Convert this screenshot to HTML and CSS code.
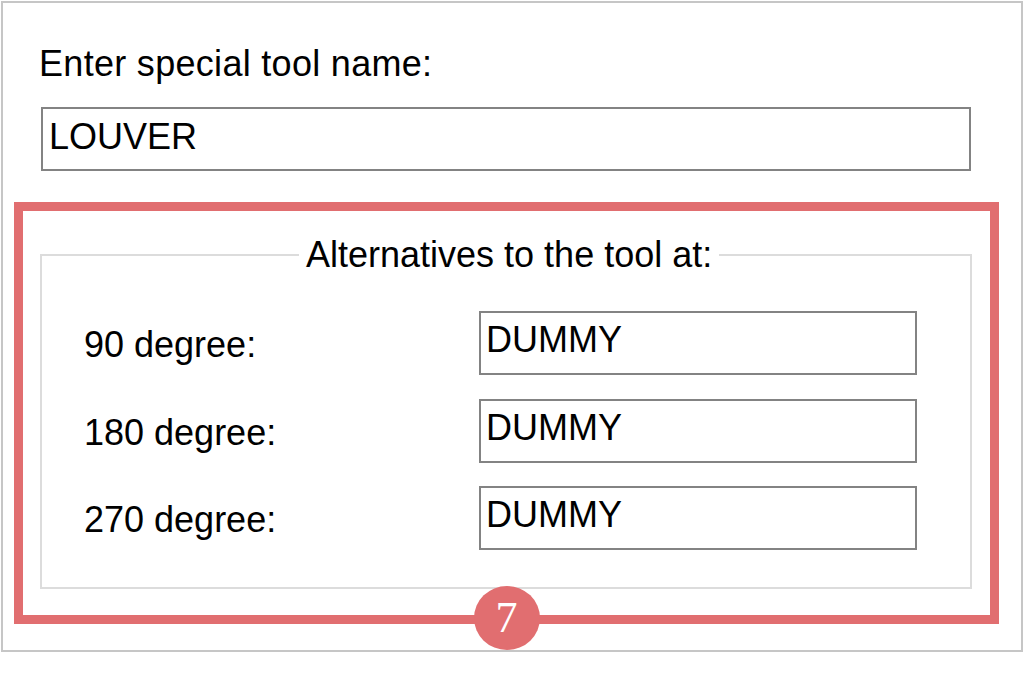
FILE: index.html
```html
<!DOCTYPE html>
<html lang="en">
<head>
<meta charset="utf-8">
<title>Special tool</title>
<link rel="stylesheet" href="styles.css">
</head>
<body>
<div class="frame">
  <div class="top">
    <div class="label">Enter special tool name:</div>
    <div class="textbox wide">LOUVER</div>
  </div>
  <div class="highlight">
    <fieldset class="group">
      <legend class="legend">Alternatives to the tool at:</legend>
      <div class="rows">
        <div class="row-label">90 degree:</div>
        <div class="textbox">DUMMY</div>
        <div class="row-label">180 degree:</div>
        <div class="textbox">DUMMY</div>
        <div class="row-label">270 degree:</div>
        <div class="textbox">DUMMY</div>
      </div>
    </fieldset>
    <div class="badge">7</div>
  </div>
</div>
</body>
</html>
```
FILE: styles.css
```css
* { box-sizing: border-box; }
html, body {
  margin: 0;
  padding: 0;
  background: #ffffff;
}
body {
  font-family: "Liberation Sans", Arial, sans-serif;
  font-size: 36px;
  line-height: 40px;
  color: #000000;
}
.frame {
  margin: 1px;
  width: 1022px;
  height: 651px;
  border: 2px solid #c6c6c6;
  padding: 41px 0 0 11px;
}
.top {
  padding-left: 27px;
}
.label {
  margin-left: -2px;
  height: 40px;
  letter-spacing: 0.3px;
}
.textbox {
  height: 64px;
  border: 2px solid #838383;
  padding: 7px 0 0 5px;
  background: #ffffff;
  white-space: nowrap;
}
.wide {
  margin-top: 23px;
  width: 930px;
  padding-top: 8px;
  padding-left: 6px;
}
.highlight {
  position: relative;
  margin-top: 31px;
  width: 985px;
  border: 9px solid #e16e70;
  padding: 24px 18px 26px 17px;
}
.group {
  margin: 0;
  width: 932px;
  border: 2px solid #dcdcdc;
  padding: 36px 53px 37px 42px;
  min-width: 0;
}
.legend {
  margin: 0 0 0 215px;
  padding: 0 7px;
  line-height: 40px;
}
.rows {
  display: grid;
  grid-template-columns: 395px 438px;
  row-gap: 23.5px;
  align-items: center;
}
.row-label {
  height: 40px;
  padding-top: 2px;
  white-space: nowrap;
}
.badge {
  position: absolute;
  left: 50%;
  margin-left: -33px;
  bottom: -35px;
  width: 66px;
  height: 64px;
  border-radius: 50%;
  background: #e16e70;
  color: #ffffff;
  font-family: "Liberation Serif", "Times New Roman", serif;
  font-size: 44px;
  line-height: 64px;
  text-align: center;
}
```
